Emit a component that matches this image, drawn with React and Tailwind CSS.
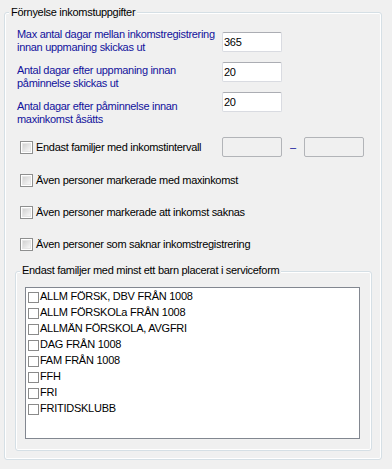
export default function App() {
  const items = [
    "ALLM FÖRSK, DBV FRÅN 1008",
    "ALLM FÖRSKOLa FRÅN 1008",
    "ALLMÄN FÖRSKOLA, AVGFRI",
    "DAG FRÅN 1008",
    "FAM FRÅN 1008",
    "FFH",
    "FRI",
    "FRITIDSKLUBB",
  ];

  const CheckBox = () => (
    <div className="w-[13px] h-[13px] shrink-0 border border-[#8e8f8f] bg-white p-[1px]">
      <div className="w-full h-full bg-linear-to-br from-[#d2d2d2] to-[#f7f7f7] border border-[#e6e6e6]" />
    </div>
  );

  const TextBox = ({ value }) => (
    <div className="w-[60px] h-[20px] shrink-0 bg-white border border-[#d9dbe1] border-t-[#abadb3] rounded-[2px] flex items-center pl-[1px] text-black">
      {value}
    </div>
  );

  const DisabledBox = () => (
    <div className="w-[60px] h-[20px] shrink-0 bg-[#f0f0f0] border border-[#b2b4b8] rounded-[2px]" />
  );

  const CheckRow = ({ label, mt, children }) => (
    <div className={`flex items-center h-[20px] ${mt}`}>
      <div className="w-[205px] flex items-center">
        <div className="ml-[3px]">
          <CheckBox />
        </div>
        <span className="ml-[3px] whitespace-nowrap">{label}</span>
      </div>
      {children}
    </div>
  );

  return (
    <div className="w-[392px] h-[469px] bg-[#f0f0f0] pt-[12px] pl-[4px] text-[11px] leading-[13px] tracking-[-0.3px] text-black [font-family:'Liberation_Sans',Arial,sans-serif]">
      <div className="relative w-[378px] h-[448px] border border-[#d5dfe5] rounded-[3px] shadow-[inset_0_0_0_1px_#ffffff] pl-[12px]">
        <div className="absolute left-[4px] top-[-7px] px-[2px] bg-[#f0f0f0] whitespace-nowrap">
          Förnyelse inkomstuppgifter
        </div>

        <div className="flex mt-[15px]">
          <div className="w-[205px] text-[#12129c] whitespace-nowrap">
            Max antal dagar mellan inkomstregistrering
            <br />
            innan uppmaning skickas ut
          </div>
          <div className="mt-[4px]">
            <TextBox value="365" />
          </div>
        </div>

        <div className="flex mt-[8px]">
          <div className="w-[205px] mt-[2px] text-[#12129c] whitespace-nowrap">
            Antal dagar efter uppmaning innan
            <br />
            påminnelse skickas ut
          </div>
          <TextBox value="20" />
        </div>

        <div className="flex mt-[2px]">
          <div className="w-[205px] mt-[8px] text-[#12129c] whitespace-nowrap">
            Antal dagar efter påminnelse innan
            <br />
            maxinkomst åsätts
          </div>
          <TextBox value="20" />
        </div>

        <CheckRow label="Endast familjer med inkomstintervall" mt="mt-[11px]">
          <DisabledBox />
          <div className="w-[22px] text-center text-[#12129c]">–</div>
          <DisabledBox />
        </CheckRow>
        <CheckRow label="Även personer markerade med maxinkomst" mt="mt-[13px]" />
        <CheckRow label="Även personer markerade att inkomst saknas" mt="mt-[12px]" />
        <CheckRow label="Även personer som saknar inkomstregistrering" mt="mt-[12px]" />

        <div className="relative -ml-[2px] mt-[17px] w-[357px] h-[180px] border border-[#d5dfe5] rounded-[3px] shadow-[inset_0_0_0_1px_#ffffff]">
          <div className="absolute left-[4px] top-[-8px] px-[2px] bg-[#f0f0f0] whitespace-nowrap">
            Endast familjer med minst ett barn placerat i serviceform
          </div>
          <div className="ml-[9px] mt-[15px] w-[335px] h-[152px] border border-[#828790] bg-white tracking-[-0.25px]">
            {items.map((it) => (
              <div key={it} className="flex h-[16px] leading-[16px] whitespace-nowrap">
                <div className="ml-[2px] mt-[4px] w-[11px] h-[11px] border border-[#8a8a8a] bg-white shrink-0" />
                <span className="ml-[1px]">{it}</span>
              </div>
            ))}
          </div>
        </div>
      </div>
    </div>
  );
}
